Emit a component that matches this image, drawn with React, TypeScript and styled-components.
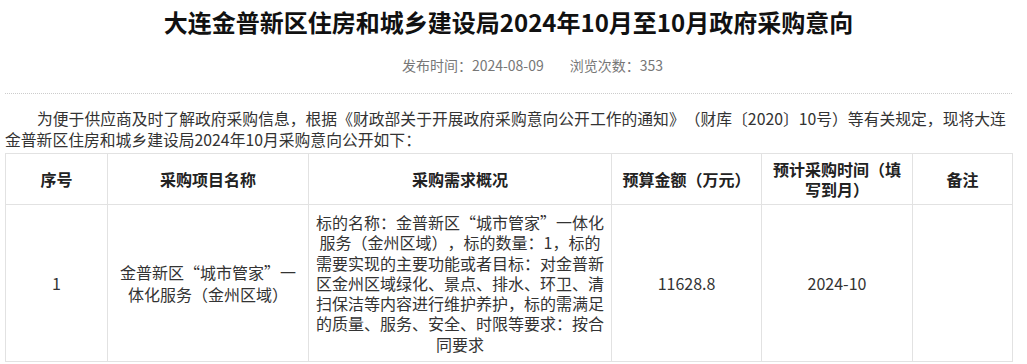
import React from "react";
import styled, { createGlobalStyle } from "styled-components";

const GlobalStyle = createGlobalStyle`
  html, body {
    margin: 0;
    padding: 0;
    background: #fff;
  }
  body {
    font-family: "Noto Sans CJK SC", "Noto Sans", sans-serif;
    color: #333;
    text-spacing-trim: space-all;
  }
`;

const columns = [102, 201, 303, 150, 151, 100];

const headers = ["序号", "采购项目名称", "采购需求概况", "预算金额（万元）", "预计采购时间（填写到月）", "备注"];

const rows = [
  {
    no: "1",
    name: "金普新区“城市管家”一体化服务（金州区域）",
    desc:
      "标的名称：金普新区“城市管家”一体化服务（金州区域），标的数量：1，标的需要实现的主要功能或者目标：对金普新区金州区域绿化、景点、排水、环卫、清扫保洁等内容进行维护养护，标的需满足的质量、服务、安全、时限等要求：按合同要求",
    budget: "11628.8",
    time: "2024-10",
    note: "",
  },
];

function App() {
  return (
    <>
      <GlobalStyle />
      <Page>
        <Title>大连金普新区住房和城乡建设局2024年10月至10月政府采购意向</Title>
        <Meta>
          <span>发布时间：2024-08-09</span>
          <span>浏览次数：353</span>
        </Meta>
        <Divider />
        <Intro>
          为便于供应商及时了解政府采购信息，根据《财政部关于开展政府采购意向公开工作的通知》（财库〔2020〕10号）等有关规定，现将大连金普新区住房和城乡建设局2024年10月采购意向公开如下：
        </Intro>
        <Table>
          <colgroup>
            {columns.map((w, i) => (
              <col key={i} style={{ width: w }} />
            ))}
          </colgroup>
          <thead>
            <tr>
              {headers.map((h) => (
                <Th key={h}>{h}</Th>
              ))}
            </tr>
          </thead>
          <tbody>
            {rows.map((r) => (
              <tr key={r.no}>
                <Td>{r.no}</Td>
                <Td $loose>{r.name}</Td>
                <Td>{r.desc}</Td>
                <Td>{r.budget}</Td>
                <Td>{r.time}</Td>
                <Td>{r.note}</Td>
              </tr>
            ))}
          </tbody>
        </Table>
      </Page>
    </>
  );
}

export default App;

const Page = styled.div`
  padding: 0 15px 0 5px;
`;

const Title = styled.h1`
  margin: 4px 0 0;
  font-size: 24px;
  line-height: 36px;
  font-weight: 700;
  color: #111;
  text-align: center;
`;

const Meta = styled.div`
  margin-top: 15px;
  display: flex;
  justify-content: center;
  gap: 26px;
  font-size: 14px;
  line-height: 20px;
  color: #777;
  padding-left: 48px;
`;

const Divider = styled.div`
  margin-top: 18px;
  border-top: 1px dotted #ccc;
`;

const Intro = styled.p`
  margin: 14px 0 3px;
  font-size: 15.8px;
  line-height: 21px;
  text-indent: 32px;
  color: #333;
`;

const Table = styled.table`
  width: 100%;
  table-layout: fixed;
  border-collapse: collapse;
  font-size: 16px;
  color: #333;
`;

const Th = styled.th`
  border: 1px solid #e2e2e2;
  padding: 5px 8px;
  height: 40px;
  line-height: 20px;
  font-weight: 700;
  color: #222;
  text-align: center;
`;

const Td = styled.td<{ $loose?: boolean }>`
  border: 1px solid #e2e2e2;
  padding: 7px 6px;
  line-height: ${(p) => (p.$loose ? "22px" : "20.3px")};
  text-align: center;
  vertical-align: middle;
`;
